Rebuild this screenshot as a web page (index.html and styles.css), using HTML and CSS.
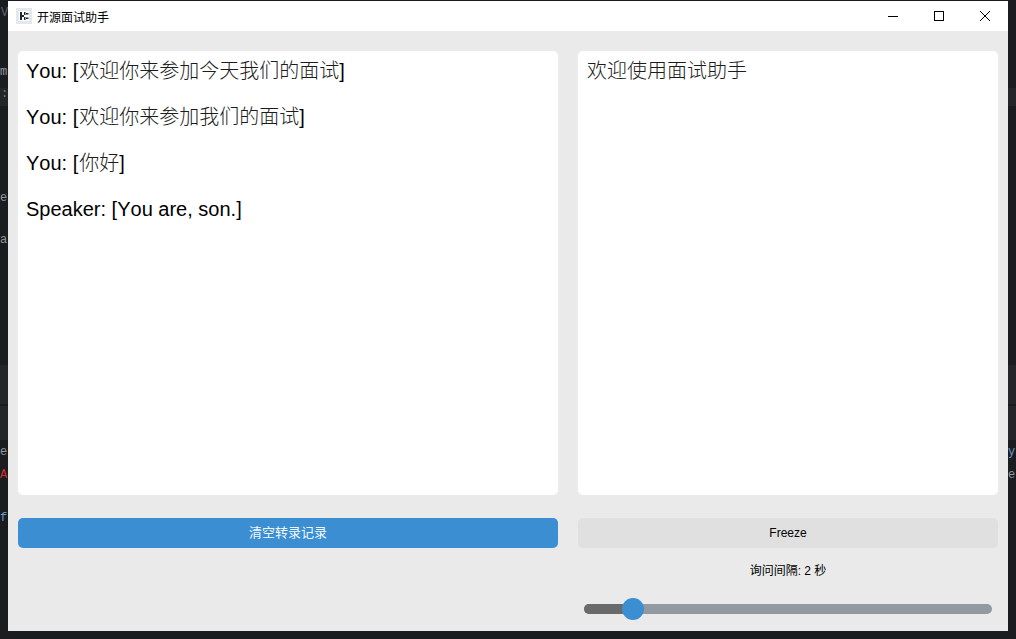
FILE: index.html
```html
<!DOCTYPE html>
<html lang="zh">
<head>
<meta charset="utf-8">
<title>开源面试助手</title>
<link rel="stylesheet" href="styles.css">
</head>
<body>
<div class="backdrop">
  <div class="band band-a"></div>
  <div class="band band-b"></div>
  <div class="band band-c"></div>
  <span class="frag frag-grey f1">V</span>
  <span class="frag frag-grey f2">m</span>
  <span class="frag frag-green f3">:</span>
  <span class="frag frag-grey f4">e</span>
  <span class="frag frag-grey f5">a</span>
  <span class="frag frag-grey f6">e</span>
  <span class="frag frag-red f7">A</span>
  <span class="frag frag-blue f8">f</span>
  <span class="frag frag-blue f9">y</span>
  <span class="frag frag-grey f10">e</span>
</div>
<div class="window">
  <header class="titlebar">
    <div class="app">
      <svg class="app-icon" width="16" height="16" viewBox="0 0 16 16"><rect width="16" height="16" fill="#e4e8ec"/><rect x="3" y="3" width="10" height="10" fill="#fff"/><path d="M4 4h2v8H4zM6 7h2v2H6zM8 4h1.500v3H8zM8 9h1.500v3H8zM10 5h2.500v1.500H10zM10 9.500h2.500V11H10z" fill="#16283c"/></svg>
      <span class="app-title">开源面试助手</span>
    </div>
    <div class="controls">
      <button class="ctl"><svg width="12" height="12" viewBox="0 0 12 12"><path d="M1 6.500h10" stroke="#000" fill="none"/></svg></button>
      <button class="ctl"><svg width="12" height="12" viewBox="0 0 12 12"><rect x="1.500" y="1.500" width="9" height="9" stroke="#000" fill="none"/></svg></button>
      <button class="ctl"><svg width="12" height="12" viewBox="0 0 12 12"><path d="M1 1l10 10M11 1L1 11" stroke="#000" fill="none"/></svg></button>
    </div>
  </header>
  <main class="content">
    <section class="panel">
      <p>You: [<span class="cjk">欢迎你来参加今天我们的面试</span>]</p>
      <p>You: [<span class="cjk">欢迎你来参加我们的面试</span>]</p>
      <p>You: [<span class="cjk">你好</span>]</p>
      <p>Speaker: [You are, son.]</p>
    </section>
    <section class="panel">
      <p><span class="cjk">欢迎使用面试助手</span></p>
    </section>
    <button class="btn btn-primary">清空转录记录</button>
    <div class="side">
      <button class="btn btn-secondary">Freeze</button>
      <div class="label">询问间隔: 2 秒</div>
      <div class="slider">
        <div class="slider-fill"></div>
        <div class="slider-thumb"></div>
      </div>
    </div>
  </main>
</div>
</body>
</html>
```
FILE: styles.css
```css
* { box-sizing: border-box; }
html, body { height: 100%; }
body {
  margin: 0;
  padding: 1px 8px 8px;
  background: #1b1c1f;
  overflow: hidden;
  font-family: "Liberation Sans", "Noto Sans CJK SC", sans-serif;
  font-kerning: none;
  color: #000;
}
.backdrop {
  position: absolute;
  inset: 0;
  overflow: hidden;
  font-family: "Liberation Mono", monospace;
  font-size: 12px;
  line-height: 14px;
}
.band { position: absolute; left: 0; right: 0; background: #232528; }
.band-a { top: 88px; height: 18px; }
.band-b { top: 365px; height: 39px; }
.band-c { top: 406px; height: 34px; }
.frag { position: absolute; }
.frag-grey { color: #8f969e; }
.frag-green { color: #4f8a60; }
.frag-red { color: #c8322f; }
.frag-blue { color: #6b9ac8; }
.f1 { left: 1px; top: 6px; color: #5c6670; }
.f2 { left: 0; top: 65px; }
.f3 { left: 1px; top: 87px; }
.f4 { left: 0; top: 191px; }
.f5 { left: 0; top: 233px; }
.f6 { left: 0; top: 445px; }
.f7 { left: 0; top: 468px; }
.f8 { left: 0; top: 511px; }
.f9 { left: 1008px; top: 445px; }
.f10 { left: 1008px; top: 468px; }
.window {
  position: relative;
  width: 1000px;
  height: 630px;
  background: #eaeaea;
  display: flex;
  flex-direction: column;
}
.titlebar {
  height: 30px;
  background: #fff;
  display: flex;
  justify-content: space-between;
  align-items: center;
  flex: none;
}
.app { display: flex; align-items: center; padding-left: 8px; gap: 5px; }
.app-icon { display: block; }
.app-title { font-size: 12px; }
.controls { display: flex; height: 100%; }
.ctl {
  width: 46px;
  height: 30px;
  border: 0;
  padding: 0;
  background: none;
  display: flex;
  align-items: center;
  justify-content: center;
}
.content {
  flex: 1;
  display: grid;
  grid-template-columns: 540px 420px;
  grid-template-rows: 444px auto;
  column-gap: 20px;
  row-gap: 23px;
  padding: 20px 10px 0;
  align-items: start;
}
.panel {
  height: 444px;
  background: #fff;
  border-radius: 5px;
  padding: 8px;
}
.panel p {
  margin: 0 0 18px;
  font-size: 20px;
  line-height: 24px;
  height: 28px;
}
.cjk { color: #1c1c1c; font-weight: 300; padding-left: 1px; }
.btn {
  display: block;
  width: 100%;
  height: 30px;
  border: 0;
  border-radius: 5px;
  font-family: inherit;
  font-size: 12px;
  padding: 0;
}
.btn-primary { background: #3b8ed2; color: #f2f7fc; font-size: 13px; padding-bottom: 3px; }
.btn-secondary { background: #e0e0e0; color: #000; }
.side { display: flex; flex-direction: column; }
.label {
  margin-top: 15px;
  height: 16px;
  line-height: 16px;
  font-size: 12px;
  text-align: center;
}
.slider {
  position: relative;
  margin: 25px 6px 0;
  height: 10px;
  border-radius: 5px;
  background: #929aa1;
}
.slider-fill {
  width: 49px;
  height: 10px;
  border-radius: 5px 0 0 5px;
  background: #6a6a6a;
}
.slider-thumb {
  position: absolute;
  left: 38px;
  top: -6px;
  width: 22px;
  height: 22px;
  border-radius: 50%;
  background: #3b8ed2;
}
```
